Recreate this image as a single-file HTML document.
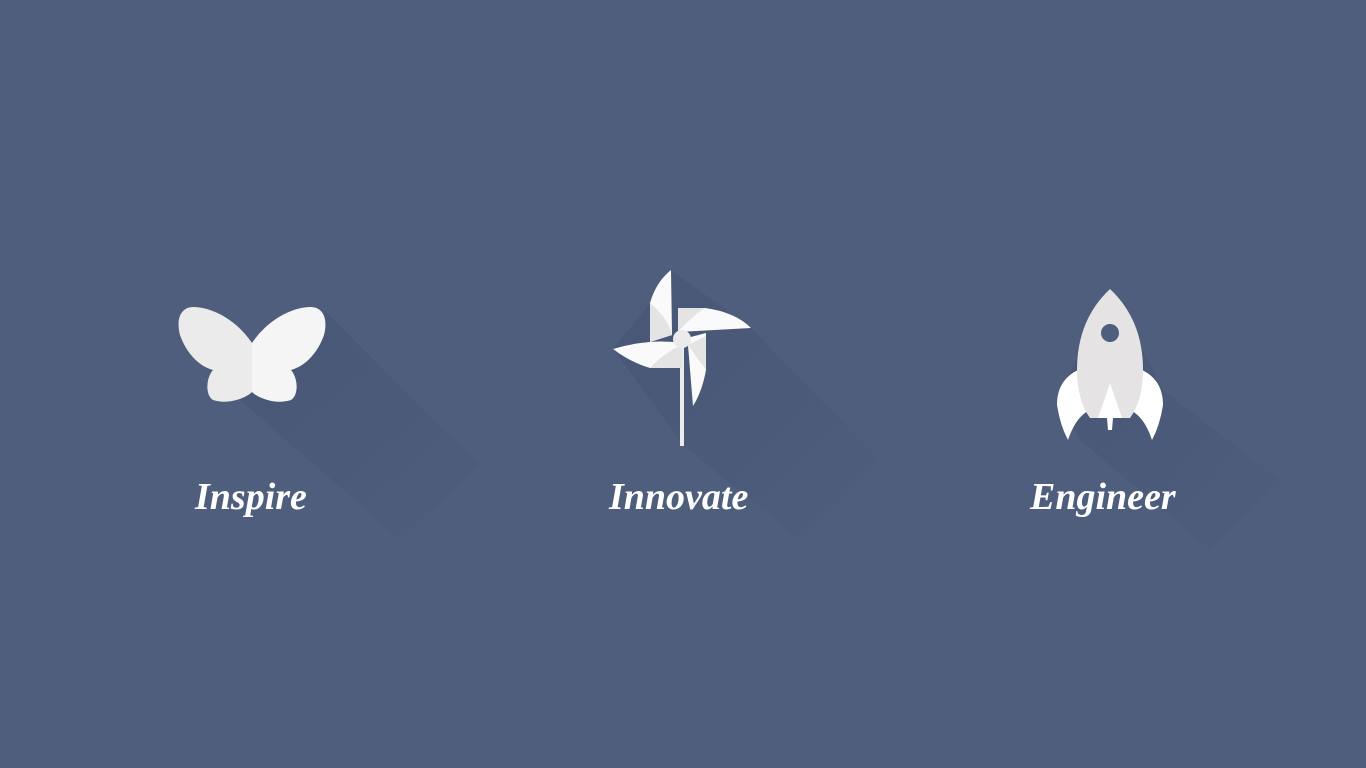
<!DOCTYPE html>
<html><head><meta charset="utf-8"><style>
html,body{margin:0;padding:0;width:1366px;height:768px;overflow:hidden;background:#4f5e7d}
svg{display:block}
text{font-family:"Liberation Serif",serif;font-style:italic;font-weight:bold;fill:#fff;font-size:38px}
</style></head><body>
<svg width="1366" height="768" viewBox="0 0 1366 768">
<defs>
<linearGradient id="sh" x1="0" y1="0" x2="1" y2="1">
<stop offset="0" stop-color="#1e2a45" stop-opacity="0.14"/>
<stop offset="0.6" stop-color="#1e2a45" stop-opacity="0.07"/>
<stop offset="1" stop-color="#1e2a45" stop-opacity="0"/>
</linearGradient>
</defs>
<rect width="1366" height="768" fill="#4f5e7d"/>
<polygon points="326,312 480,466 400,540 240,400 208,395" fill="url(#sh)"/>
<polygon points="671,270 751,328 880,460 800,540 684,446 613,349 650,303" fill="url(#sh)"/>
<polygon points="1110,289 1163,390 1280,480 1210,550 1080,440 1057,400" fill="url(#sh)"/>
<!-- butterfly -->
<path d="M252,343 C238,322 215,308 195,307 C180,306 176,320 180,335 C186,352 198,366 213,370 C206,378 205,395 213,400 C228,405 246,398 252,392 Z" fill="#ebebeb"/>
<path d="M252,343 C266,322 289,308 309,307 C324,306 328,320 324,335 C318,352 306,366 291,370 C298,378 299,395 291,400 C276,405 258,398 252,392 Z" fill="#f5f5f5"/>
<!-- pinwheel -->
<rect x="680" y="344" width="4" height="102" fill="#ececec"/>
<path d="M650,342 L650,303 Q656,282 671,270 L672,335 Z" fill="#fafafa"/>
<path d="M650,303 Q668,318 672,335 L650,342 Z" fill="#e4e4e4"/>
<path d="M678,332 L678,308 L705,308 Q735,312 751,328 Z" fill="#fafafa"/>
<path d="M705,308 Q690,318 678,332 L678,308 Z" fill="#e4e4e4"/>
<path d="M687,338 L706,333 L706,370 Q702,392 693,406 L688,345 Z" fill="#fafafa"/>
<path d="M706,370 Q695,355 688,345 L706,336 Z" fill="#e4e4e4"/>
<path d="M613,349 Q650,338 682,343 L682,368 L650,368 Q630,362 613,349 Z" fill="#fafafa"/>
<path d="M650,368 Q665,352 682,345 L682,368 Z" fill="#e4e4e4"/>
<circle cx="682" cy="339" r="9" fill="#ebebeb"/>
<!-- rocket -->
<path d="M1078,370 Q1057,380 1057,405 Q1060,425 1068,440 Q1078,410 1098,408 L1095,375 Z" fill="#fff"/>
<path d="M1142,370 Q1163,380 1163,405 Q1160,425 1152,440 Q1142,410 1122,408 L1125,375 Z" fill="#fff"/>
<path d="M1110,289 Q1143,320 1143,370 Q1143,400 1130,418 L1090,418 Q1077,400 1077,370 Q1077,320 1110,289 Z" fill="#e5e3e3"/>
<circle cx="1110" cy="333" r="9" fill="#4f5e7d"/>
<path d="M1110,383 L1122,418 L1113,418 L1112,430 L1108,430 L1107,418 L1098,418 Z" fill="#fff"/>
<text x="195" y="509">Inspire</text>
<text x="609" y="509">Innovate</text>
<text x="1030" y="509">Engineer</text>
</svg>
</body></html>
